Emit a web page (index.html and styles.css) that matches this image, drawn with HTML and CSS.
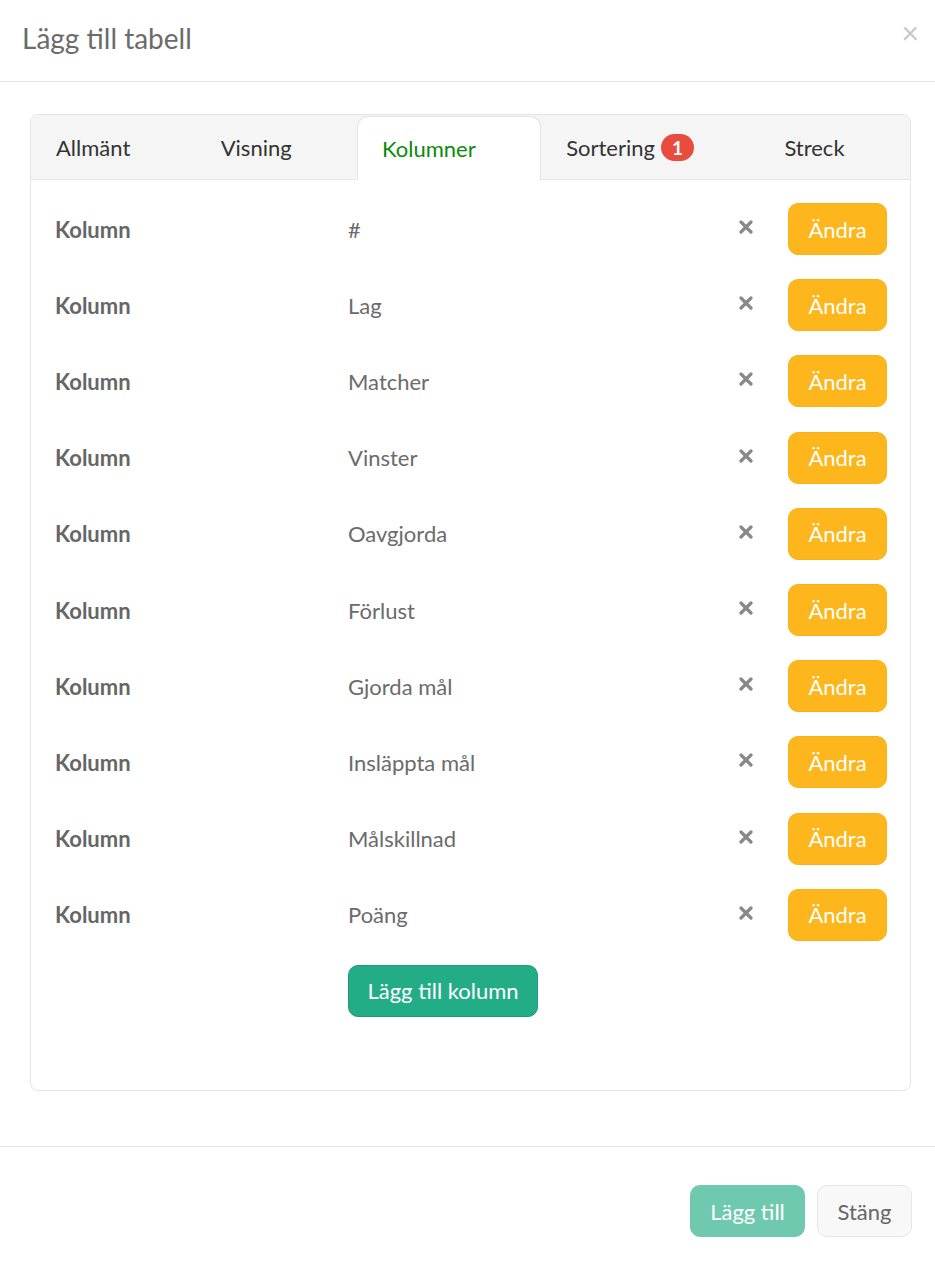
FILE: index.html
```html
<!DOCTYPE html>
<html lang="sv">
<head>
<meta charset="utf-8">
<title>Lägg till tabell</title>
<link rel="stylesheet" href="styles.css">
</head>
<body>
<div class="modal">
  <div class="modal-header">
    <h4 class="modal-title">Lägg till tabell</h4>
    <span class="close">×</span>
  </div>
  <div class="modal-body">
    <div class="card">
      <div class="tabs">
        <div class="tab">Allmänt</div>
        <div class="tab">Visning</div>
        <div class="tab active">Kolumner</div>
        <div class="tab">Sortering<span class="badge">1</span></div>
        <div class="tab">Streck</div>
      </div>
      <div class="card-body">
        <div class="row"><span class="label">Kolumn</span><span class="value">#</span><span class="remove"><svg viewBox="0 0 14 14" width="14" height="14"><path d="M2 2L12 12M12 2L2 12"/></svg></span><button class="btn btn-warning">Ändra</button></div>
        <div class="row"><span class="label">Kolumn</span><span class="value">Lag</span><span class="remove"><svg viewBox="0 0 14 14" width="14" height="14"><path d="M2 2L12 12M12 2L2 12"/></svg></span><button class="btn btn-warning">Ändra</button></div>
        <div class="row"><span class="label">Kolumn</span><span class="value">Matcher</span><span class="remove"><svg viewBox="0 0 14 14" width="14" height="14"><path d="M2 2L12 12M12 2L2 12"/></svg></span><button class="btn btn-warning">Ändra</button></div>
        <div class="row"><span class="label">Kolumn</span><span class="value">Vinster</span><span class="remove"><svg viewBox="0 0 14 14" width="14" height="14"><path d="M2 2L12 12M12 2L2 12"/></svg></span><button class="btn btn-warning">Ändra</button></div>
        <div class="row"><span class="label">Kolumn</span><span class="value">Oavgjorda</span><span class="remove"><svg viewBox="0 0 14 14" width="14" height="14"><path d="M2 2L12 12M12 2L2 12"/></svg></span><button class="btn btn-warning">Ändra</button></div>
        <div class="row"><span class="label">Kolumn</span><span class="value">Förlust</span><span class="remove"><svg viewBox="0 0 14 14" width="14" height="14"><path d="M2 2L12 12M12 2L2 12"/></svg></span><button class="btn btn-warning">Ändra</button></div>
        <div class="row"><span class="label">Kolumn</span><span class="value">Gjorda mål</span><span class="remove"><svg viewBox="0 0 14 14" width="14" height="14"><path d="M2 2L12 12M12 2L2 12"/></svg></span><button class="btn btn-warning">Ändra</button></div>
        <div class="row"><span class="label">Kolumn</span><span class="value">Insläppta mål</span><span class="remove"><svg viewBox="0 0 14 14" width="14" height="14"><path d="M2 2L12 12M12 2L2 12"/></svg></span><button class="btn btn-warning">Ändra</button></div>
        <div class="row"><span class="label">Kolumn</span><span class="value">Målskillnad</span><span class="remove"><svg viewBox="0 0 14 14" width="14" height="14"><path d="M2 2L12 12M12 2L2 12"/></svg></span><button class="btn btn-warning">Ändra</button></div>
        <div class="row"><span class="label">Kolumn</span><span class="value">Poäng</span><span class="remove"><svg viewBox="0 0 14 14" width="14" height="14"><path d="M2 2L12 12M12 2L2 12"/></svg></span><button class="btn btn-warning">Ändra</button></div>
        <div class="add-row"><button class="btn btn-success">Lägg till kolumn</button></div>
      </div>
    </div>
  </div>
  <div class="modal-footer">
    <button class="btn btn-primary-light">Lägg till</button>
    <button class="btn btn-default">Stäng</button>
  </div>
</div>
</body>
</html>
```

FILE: styles.css
```css
html, body {
  margin: 0;
  padding: 0;
  background: #ffffff;
}
body {
  font-family: Lato, "Open Sans", sans-serif;
  color: #333;
}
.modal {
  width: 935px;
  height: 1268px;
  background: #fff;
  box-sizing: border-box;
}
.modal-header {
  height: 82px;
  box-sizing: border-box;
  border-bottom: 1px solid #e5e5e5;
  display: flex;
  align-items: flex-start;
  justify-content: space-between;
  padding: 0 16px 0 22px;
}
.modal-title {
  margin: 0;
  padding-top: 20px;
  font-size: 28px;
  font-weight: 400;
  line-height: 36px;
  color: #6b6b6b;
}
.close {
  padding-top: 14px;
  font-size: 30px;
  line-height: 36px;
  color: #c8c8c8;
  font-weight: 400;
}
.modal-body {
  padding: 32px 24px 0 30px;
  height: 1065px;
  box-sizing: border-box;
  border-bottom: 1px solid #e5e5e5;
}
.card {
  border: 1px solid #e5e5e5;
  border-radius: 8px;
  height: 977px;
  box-sizing: border-box;
  overflow: hidden;
}
.tabs {
  display: flex;
  background: #f5f5f5;
  height: 65px;
  box-sizing: border-box;
  border-bottom: 1px solid #e5e5e5;
  border-radius: 8px 8px 0 0;
  padding-top: 1px;
}
.tab {
  flex: 1 1 auto;
  padding: 0 25px;
  font-size: 22px;
  line-height: 62px;
  color: #333;
  display: flex;
  align-items: center;
  white-space: nowrap;
}
.tab.active {
  background: #fff;
  color: #0a8a0a;
  border: 1px solid #e5e5e5;
  border-bottom: none;
  border-radius: 11px 11px 0 0;
  margin-bottom: -1px;
  padding: 0 24px;
}
.badge {
  display: inline-block;
  margin-left: 6px;
  background: #e74c3c;
  color: #fff;
  font-weight: 700;
  font-size: 19px;
  line-height: 27px;
  height: 27px;
  min-width: 33px;
  text-align: center;
  border-radius: 14px;
}
.card-body {
  padding: 11px 23px 0 24px;
}
.row {
  display: grid;
  grid-template-columns: 293px 1fr 50px 99px;
  align-items: center;
  height: 76.2px;
}
.label {
  font-weight: 700;
  font-size: 22px;
  color: #666;
}
.value {
  font-size: 22px;
  color: #6b6b6b;
}
.remove {
  display: flex;
  align-items: center;
  margin-left: 1px;
  margin-top: -4px;
}
.remove svg {
  stroke: #888;
  stroke-width: 3.2;
  stroke-linecap: round;
  fill: none;
}
.btn {
  font-family: Lato, "Open Sans", sans-serif;
  font-size: 22px;
  height: 52px;
  border-radius: 10px;
  border: 1px solid transparent;
  padding: 0 18px;
  cursor: pointer;
  box-sizing: border-box;
}
.btn-warning {
  background: #fdb61c;
  border-color: #f9b01a;
  color: #fff;
  width: 99px;
  padding: 0;
}
.add-row {
  padding: 12px 0 0 293px;
}
.btn-success {
  background: #23ad87;
  border-color: #1e9b78;
  color: #fff;
  width: 190px;
  padding: 0;
}
.modal-footer {
  display: flex;
  justify-content: flex-end;
  gap: 12px;
  padding: 38px 23px 0 0;
}
.btn-primary-light {
  background: #6fc9ae;
  border-color: #6fc9ae;
  color: #fff;
  width: 115px;
  padding: 0;
}
.btn-default {
  background: #f8f8f8;
  border-color: #e6e6e6;
  color: #666;
  width: 95px;
  padding: 0;
}
```
